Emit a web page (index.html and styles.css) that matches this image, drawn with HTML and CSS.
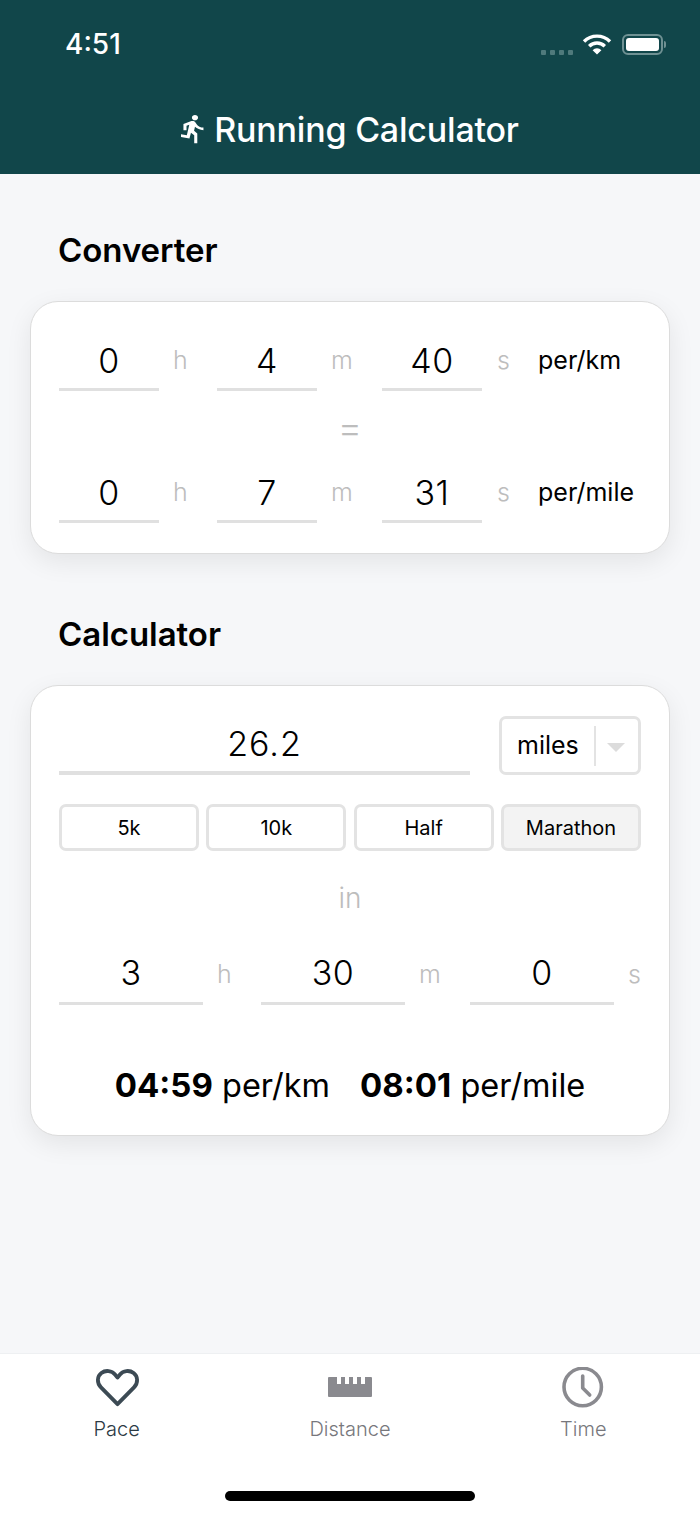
FILE: index.html
```html
<!DOCTYPE html>
<html>
<head>
  <meta charset="UTF-8" />
  <title>Running Calculator</title>
  <meta name="viewport" content="width=device-width, initial-scale=1" />
  <link rel="stylesheet" href="styles.css">
</head>
<body>
  <div class="app">
    <header class="header">
      <div class="status-bar">
        <span class="clock">4:51</span>
        <div class="status-icons">
          <div class="signal"><i></i><i></i><i></i><i></i></div>
          <svg class="wifi" width="30" height="22" viewBox="0 0 30 22">
            <path d="M2 8.5a18.5 18.5 0 0 1 26 0" fill="none" stroke="#fff" stroke-width="3.4" />
            <path d="M7.2 13.2a11 11 0 0 1 15.6 0" fill="none" stroke="#fff" stroke-width="3.4" />
            <path d="M10.6 17.2l4.4 4.4 4.4-4.4a6.2 6.2 0 0 0-8.8 0z" fill="#fff" />
          </svg>
          <div class="battery"><div class="battery-fill"></div></div>
          <div class="battery-cap"></div>
        </div>
      </div>
      <h1 class="title">
        <svg class="runner" width="24" height="29" viewBox="4.4 1.4 15.6 22.2" preserveAspectRatio="none">
          <path fill="#fff" d="M13.49 5.48c1.1 0 2-.9 2-2s-.9-2-2-2-2 .9-2 2 .9 2 2 2zm-3.6 13.9l1-4.4 2.1 2v6h2v-7.5l-2.1-2 .6-3c1.3 1.500 3.300 2.500 5.500 2.500v-2c-1.900 0-3.500-1-4.300-2.400l-1-1.600c-.4-.6-1-1-1.700-1-.3 0-.5.100-.8.100l-5.200 2.200v4.700h2v-3.400l1.800-.7-1.600 8.100-4.900-1-.4 2 7 1.400z" />
        </svg>
        Running Calculator
      </h1>
    </header>

    <main class="content">
      <h2 class="section-title">Converter</h2>
      <section class="card converter">
        <div class="time-row">
          <div class="field">0</div><span class="unit">h</span>
          <div class="field">4</div><span class="unit">m</span>
          <div class="field">40</div><span class="unit">s</span>
          <span class="per">per/km</span>
        </div>
        <div class="equals">=</div>
        <div class="time-row">
          <div class="field">0</div><span class="unit">h</span>
          <div class="field">7</div><span class="unit">m</span>
          <div class="field">31</div><span class="unit">s</span>
          <span class="per">per/mile</span>
        </div>
      </section>

      <h2 class="section-title calc-title">Calculator</h2>
      <section class="card calculator">
        <div class="distance-row">
          <div class="field distance">26.2</div>
          <div class="select">
            <span class="select-value">miles</span>
            <span class="select-arrow"></span>
          </div>
        </div>
        <div class="presets">
          <button class="preset">5k</button>
          <button class="preset">10k</button>
          <button class="preset">Half</button>
          <button class="preset preset-active">Marathon</button>
        </div>
        <div class="in-label">in</div>
        <div class="duration-row">
          <div class="field">3</div><span class="unit">h</span>
          <div class="field">30</div><span class="unit">m</span>
          <div class="field">0</div><span class="unit">s</span>
        </div>
        <div class="result">
          <span><b>04:59</b> per/km</span>
          <span><b>08:01</b> per/mile</span>
        </div>
      </section>
    </main>

    <nav class="tabs">
      <div class="tab tab-active">
        <svg width="46" height="42" viewBox="0 0 46 42">
          <path d="M23.500 37.200L7 20.400C2.600 15.800 3 9.400 7.400 6 11.600 2.800 17.800 3.600 21 7.500L23.500 10.600 26 7.500C29.200 3.600 35.400 2.800 39.600 6 44 9.400 44.400 15.800 40 20.400Z" fill="none" stroke="#3c4a54" stroke-width="3.800" stroke-linejoin="round" />
        </svg>
        <span>Pace</span>
      </div>
      <div class="tab">
        <svg width="46" height="42" viewBox="0 0 46 42">
          <path d="M1 11a1 1 0 0 1 1-1h8v7h4v-7h4v7h4v-7h4v7h4v-7h4v7h4v-7h6a1 1 0 0 1 1 1v18a1 1 0 0 1-1 1H2a1 1 0 0 1-1-1z" fill="#8a8a8f" />
        </svg>
        <span>Distance</span>
      </div>
      <div class="tab">
        <svg width="46" height="42" viewBox="0 0 46 42">
          <circle cx="22.700" cy="20" r="18.700" fill="none" stroke="#8a8a8f" stroke-width="3.600" />
          <path d="M22.700 9v12l7 7" fill="none" stroke="#8a8a8f" stroke-width="3.600" stroke-linecap="round" stroke-linejoin="round" />
        </svg>
        <span>Time</span>
      </div>
      <div class="home-indicator"></div>
    </nav>
  </div>
</body>
</html>
```

FILE: styles.css
```css
* {
  box-sizing: border-box;
}
html, body {
  margin: 0;
  padding: 0;
}
body {
  font-family: Inter, "Noto Sans", sans-serif;
  color: #000;
  background-color: #f6f7f9;
}
.app {
  width: 700px;
  height: 1515px;
  display: flex;
  flex-direction: column;
  overflow: hidden;
}

/* header */
.header {
  height: 174px;
  background-color: #11464a;
  color: #fff;
  padding-top: 24px;
}
.status-bar {
  height: 40px;
  padding: 0 34px 0 65px;
  display: flex;
  align-items: center;
  justify-content: space-between;
}
.clock {
  font-size: 28px;
  font-weight: 500;
}
.status-icons {
  display: flex;
  align-items: center;
}
.signal {
  display: flex;
  gap: 4px;
  margin-top: 17px;
  margin-right: 9px;
}
.signal i {
  width: 5px;
  height: 5px;
  border-radius: 1px;
  background-color: #4f7a7c;
}
.wifi {
  margin-right: 10px;
}
.battery {
  width: 41px;
  height: 21px;
  border: 2px solid #6f9193;
  border-radius: 6px;
  padding: 2px;
}
.battery-fill {
  height: 100%;
  background-color: #fff;
  border-radius: 3px;
}
.battery-cap {
  width: 2px;
  height: 7px;
  margin-left: 1px;
  background-color: #6f9193;
  border-radius: 0 2px 2px 0;
}
.title {
  margin: 42px 0 0;
  height: 46px;
  display: flex;
  align-items: center;
  justify-content: center;
  gap: 9px;
  font-size: 34px;
  font-weight: 500;
  letter-spacing: -0.2px;
}

/* main */
.content {
  flex: 1;
  padding: 0 30px;
}
.section-title {
  margin: 54px 0 29px 28px;
  height: 44px;
  line-height: 44px;
  font-size: 33px;
  font-weight: 600;
  letter-spacing: -0.05px;
}
.section-title.calc-title {
  margin-top: 58px;
  margin-bottom: 29px;
}
.card {
  background: #fff;
  border: 1px solid #dcdcdc;
  border-radius: 28px;
  box-shadow: 0 8px 26px rgba(0,0,0,0.08);
  padding: 0 28px;
}
.converter {
  height: 253px;
  padding-top: 27px;
}
.calculator {
  height: 451px;
  padding-top: 30px;
}
.time-row, .duration-row {
  display: flex;
  align-items: flex-end;
}
.field {
  width: 100px;
  height: 62px;
  line-height: 60px;
  text-align: center;
  font-size: 34px;
  font-weight: 350;
  letter-spacing: 0.5px;
  border-bottom: 3px solid #e0e0e0;
}
.time-row .field {
  line-height: 64px;
}
.unit {
  width: 58px;
  height: 62px;
  line-height: 62px;
  padding-left: 14px;
  font-size: 25px;
  font-weight: 300;
  color: #bdbdbd;
}
.time-row .unit {
  line-height: 63px;
}
.time-row .unit:nth-child(4) {
  width: 65px;
}
.time-row .unit:nth-child(6) {
  width: 42px;
  padding-left: 15px;
}
.per {
  height: 62px;
  line-height: 63px;
  margin-left: 14px;
  font-size: 25px;
  white-space: nowrap;
}
.equals {
  height: 70px;
  line-height: 72px;
  text-align: center;
  font-size: 38px;
  font-weight: 300;
  color: #bdbdbd;
}
.distance-row {
  display: flex;
  align-items: flex-end;
  justify-content: space-between;
}
.field.distance {
  width: 411px;
  height: 59px;
  line-height: 55px;
  letter-spacing: 1px;
  border-bottom-width: 4px;
}
.select {
  width: 142px;
  height: 59px;
  border: 3px solid #e3e3e3;
  border-radius: 7px;
  display: flex;
  align-items: center;
  padding-left: 15px;
  position: relative;
}
.select-value {
  font-size: 25px;
  font-weight: 400;
  width: 77px;
  margin-top: -2px;
}
.select-arrow {
  height: 40px;
  border-left: 2px solid #e3e3e3;
  position: relative;
  flex: 1;
}
.select-arrow::after {
  content: "";
  position: absolute;
  top: 17px;
  left: 11px;
  border-left: 9px solid transparent;
  border-right: 9px solid transparent;
  border-top: 9px solid #dcdcdc;
}
.presets {
  display: flex;
  justify-content: space-between;
  margin-top: 29px;
}
.preset {
  width: 140px;
  height: 47px;
  font-family: inherit;
  font-size: 20px;
  color: #000;
  background: #fff;
  border: 3px solid #e3e3e3;
  border-radius: 7px;
  padding: 0;
}
.preset-active {
  background-color: #f3f3f3;
}
.in-label {
  height: 94px;
  line-height: 94px;
  text-align: center;
  font-size: 28px;
  font-weight: 300;
  color: #bdbdbd;
}
.duration-row {
  margin-top: -2px;
}
.duration-row .field {
  width: 144px;
}
.duration-row .unit {
  width: 58px;
}
.duration-row .unit:nth-child(4) {
  width: 65px;
}
.duration-row .unit:nth-child(6) {
  width: 27px;
  padding-left: 0;
  text-align: right;
}
.result {
  margin-top: 58px;
  display: flex;
  justify-content: center;
  gap: 30px;
  font-size: 32.5px;
  line-height: 44px;
}
.result b {
  font-size: 33px;
  font-weight: 700;
}

/* tab bar */
.tabs {
  height: 162px;
  background-color: #fff;
  border-top: 1px solid #eef0f2;
  display: flex;
  position: relative;
  padding-top: 13px;
}
.tab {
  width: 233.33px;
  display: flex;
  flex-direction: column;
  align-items: center;
  font-size: 20px;
  font-weight: 300;
  color: #77777c;
}
.tab span {
  margin-top: 8px;
}
.tab-active {
  color: #2c3a44;
}
.home-indicator {
  position: absolute;
  left: 225px;
  bottom: 14px;
  width: 250px;
  height: 10px;
  border-radius: 5px;
  background-color: #000;
}
```
